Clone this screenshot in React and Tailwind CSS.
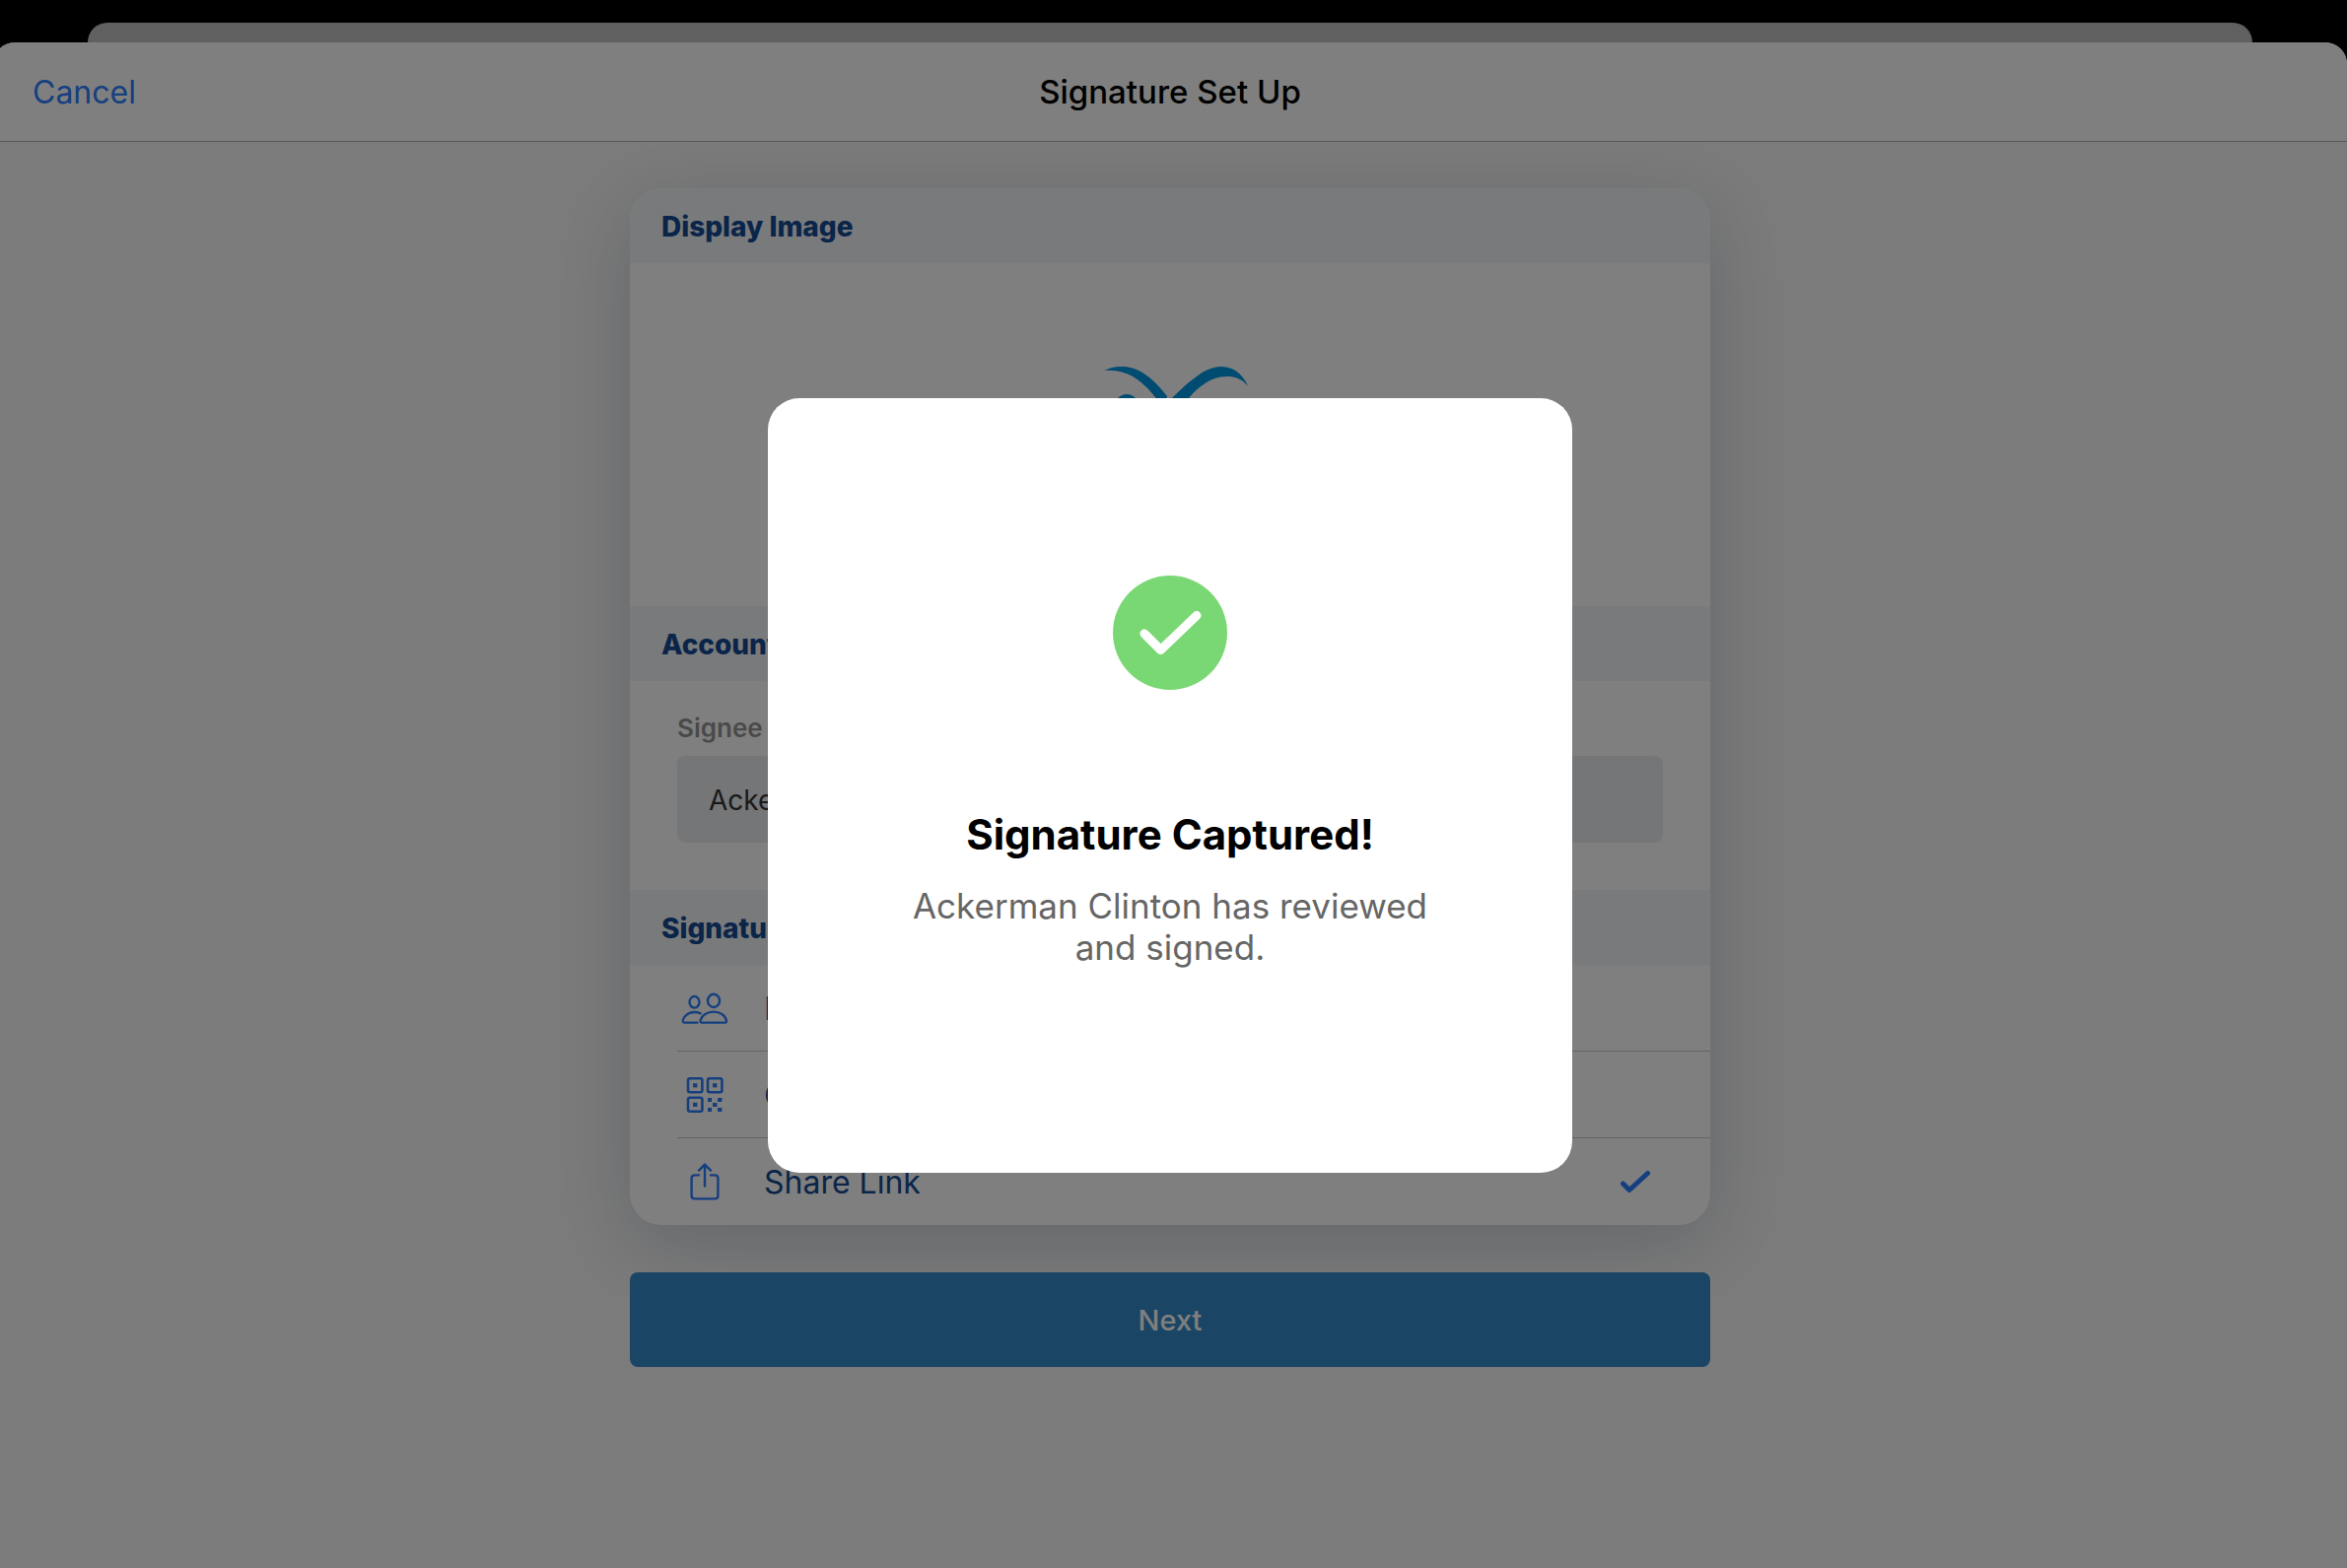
import React from "react";

function PeopleIcon() {
  return (
    <svg viewBox="0 0 48 32" className="h-8 w-12" fill="none" stroke="currentColor" strokeWidth="2.4" strokeLinejoin="round" strokeLinecap="round">
      <ellipse cx="13.5" cy="9.8" rx="5" ry="5.8" />
      <ellipse cx="33" cy="8.4" rx="6" ry="6.6" />
      <path d="M16.500 30.600H3.400C1.800 30.600 1.600 29.400 1.900 28C3 23.400 8 20 13.600 20C16 20 18 20.500 19.700 21.300" />
      <path d="M21.200 30.600H44.400C46 30.600 46.200 29.200 45.800 27.800C44.600 23.400 39.600 19.600 33 19.600C26.400 19.600 21 23.400 19.700 27.800C19.300 29.400 19.600 30.600 21.200 30.600Z" />
    </svg>
  );
}

function QrIcon() {
  return (
    <svg viewBox="0 0 38 38" className="h-[38px] w-[38px]" fill="none" stroke="currentColor" strokeWidth="2.6">
      <rect x="2" y="2.3" width="14.4" height="14" rx="2" />
      <rect x="22" y="2.3" width="14.4" height="14" rx="2" />
      <rect x="2" y="21.7" width="14.4" height="14" rx="2" />
      <g fill="currentColor" stroke="none">
        <rect x="7" y="7.2" width="4.4" height="4.2" />
        <rect x="27" y="7.2" width="4.4" height="4.2" />
        <rect x="7" y="26.8" width="4.4" height="4.2" />
        <rect x="22" y="22" width="4" height="4" />
        <rect x="32" y="22" width="4.4" height="4" />
        <rect x="27" y="27" width="4.4" height="4" />
        <rect x="22" y="32" width="4" height="4" />
        <rect x="32" y="32" width="4.4" height="4" />
      </g>
    </svg>
  );
}

function ShareIcon() {
  return (
    <svg viewBox="0 0 30 38" className="h-[38px] w-[30px]" fill="none" stroke="currentColor" strokeWidth="2.4" strokeLinecap="round" strokeLinejoin="round">
      <path d="M9 12.400H4.800Q1.600 12.400 1.600 15.600V33.200Q1.600 36.400 4.800 36.400H25.200Q28.400 36.400 28.400 33.200V15.600Q28.400 12.400 25.200 12.400H21" />
      <path d="M15 23.400V2" />
      <path d="M9 7.600L15 1.600L21 7.600" />
    </svg>
  );
}

const METHODS = [
  { label: "In Person", Icon: PeopleIcon },
  { label: "QR Code", Icon: QrIcon },
  { label: "Share Link", Icon: ShareIcon, selected: true },
];

function SectionTitle({ children }) {
  return (
    <h2 className="flex h-19 items-center bg-[#f2f5f9] px-8 pt-0.5 text-[28px] leading-9 font-extrabold text-[#144a92]">
      {children}
    </h2>
  );
}

function Logo() {
  return (
    <svg viewBox="0 0 174 138" className="h-[138px] w-[174px]" fill="#0096e4" role="img" aria-label="Company logo">
      <path d="M20 4C30 -1 42 -1.500 53 3C66 8.500 76 20 84 30L82 38L77 38C71 29 61 17 50 10.500C41 5 31 3 20 4Z" />
      <path d="M89 32C96 25 103 18 110 13C120 5 129 0 139 0C152 0.500 160 7 166 19.500C159 12 153 10 145 10C135 10 128 13 121 18C115 22 111 26 106 32L100 40L84 40Z" />
      <circle cx="43" cy="40" r="12" />
      <circle cx="131" cy="40" r="8" />
      <path d="M80 36C92 54 108 76 136 84C112 84 94 72 80 52C66 74 50 84 30 84C54 76 70 54 80 36Z" />
    </svg>
  );
}

function SetUpSheet() {
  return (
    <div className="-ml-[7px] flex grow flex-col overflow-hidden rounded-t-[22px] bg-[#f7f7f7]">
      <header className="grid h-[101px] grid-cols-[1fr_auto_1fr] items-center border-b border-[#b0b0b0] bg-white px-10">
        <button type="button" className="justify-self-start pt-0.5 text-[32px] leading-10 text-[#2c7efe]">
          Cancel
        </button>
        <h1 className="text-[33px] leading-10 font-medium text-black">Signature Set Up</h1>
      </header>
      <form className="mx-auto flex w-full max-w-[1096px] flex-col gap-12 pt-[47px]">
        <div className="overflow-hidden rounded-[32px] bg-white shadow-[0_20px_80px_rgba(43,58,85,0.22)]">
          <SectionTitle>Display Image</SectionTitle>
          <div className="flex h-[348px] items-center justify-center">
            <Logo />
          </div>
          <SectionTitle>Account Information</SectionTitle>
          <div className="flex flex-col gap-3 px-12 pt-8 pb-12">
            <label htmlFor="signee" className="text-[26px] leading-8 font-semibold text-[#949494]">
              Signee Name
            </label>
            <input
              id="signee"
              defaultValue="Ackerman Clinton"
              className="h-22 rounded-lg bg-[#ebedf1] px-8 pt-0.5 text-[28px] leading-9 text-[#333333]"
            />
          </div>
          <SectionTitle>Signature Method</SectionTitle>
          <div className="pl-12">
            {METHODS.map(({ label, Icon, selected }) => (
              <label key={label} className="relative flex h-22 items-center border-b border-[#c8c8c8] pr-[60px] last:border-0">
                <input type="radio" name="method" defaultChecked={selected} className="sr-only" />
                <span className="flex w-14 justify-center text-[#2c7efe]">
                  <Icon />
                </span>
                <span className="ml-8 grow pt-0.5 text-[32px] leading-10 text-[#144a92]">{label}</span>
                {selected && (
                  <svg viewBox="0 0 32 24" className="h-6 w-8" fill="none" stroke="#2c7efe" strokeWidth="5" strokeLinecap="round" strokeLinejoin="round">
                    <path d="M3.500 14L10 20.500L28.500 3.500" />
                  </svg>
                )}
              </label>
            ))}
          </div>
        </div>
        <button type="button" className="h-24 rounded-lg bg-[#368bc8] pt-0.5 text-[29px] leading-9 font-medium text-white">
          Next
        </button>
      </form>
    </div>
  );
}

function CapturedDialog() {
  return (
    <div className="fixed inset-0 grid place-items-center bg-black/50 pt-[3px] pr-[7px]">
      <div
        role="dialog"
        aria-modal="true"
        aria-labelledby="captured-title"
        className="flex w-full max-w-[816px] flex-col items-center rounded-[32px] bg-white px-32 pt-[180px] pb-[208px] text-center"
      >
        <svg viewBox="0 0 116 116" className="h-29 w-29">
          <circle cx="58" cy="58" r="58" fill="#7ad874" />
          <path d="M32 59L48.500 75.500L85 40.500" fill="none" stroke="#ffffff" strokeWidth="9" strokeLinecap="round" strokeLinejoin="round" />
        </svg>
        <h2 id="captured-title" className="mt-30 text-[42px] leading-[54px] font-bold text-black">
          Signature Captured!
        </h2>
        <p className="mt-6 text-[35px] leading-[42px] text-[#666666]">
          Ackerman Clinton has reviewed
          <br />
          and signed.
        </p>
      </div>
    </div>
  );
}

export default function App() {
  return (
    <div className="flex min-h-screen flex-col overflow-hidden bg-black pt-[23px] font-['Inter',sans-serif]">
      <div className="mr-24 ml-[89px] h-5 rounded-t-[20px] bg-[#c0c0c0]" />
      <SetUpSheet />
      <CapturedDialog />
    </div>
  );
}
